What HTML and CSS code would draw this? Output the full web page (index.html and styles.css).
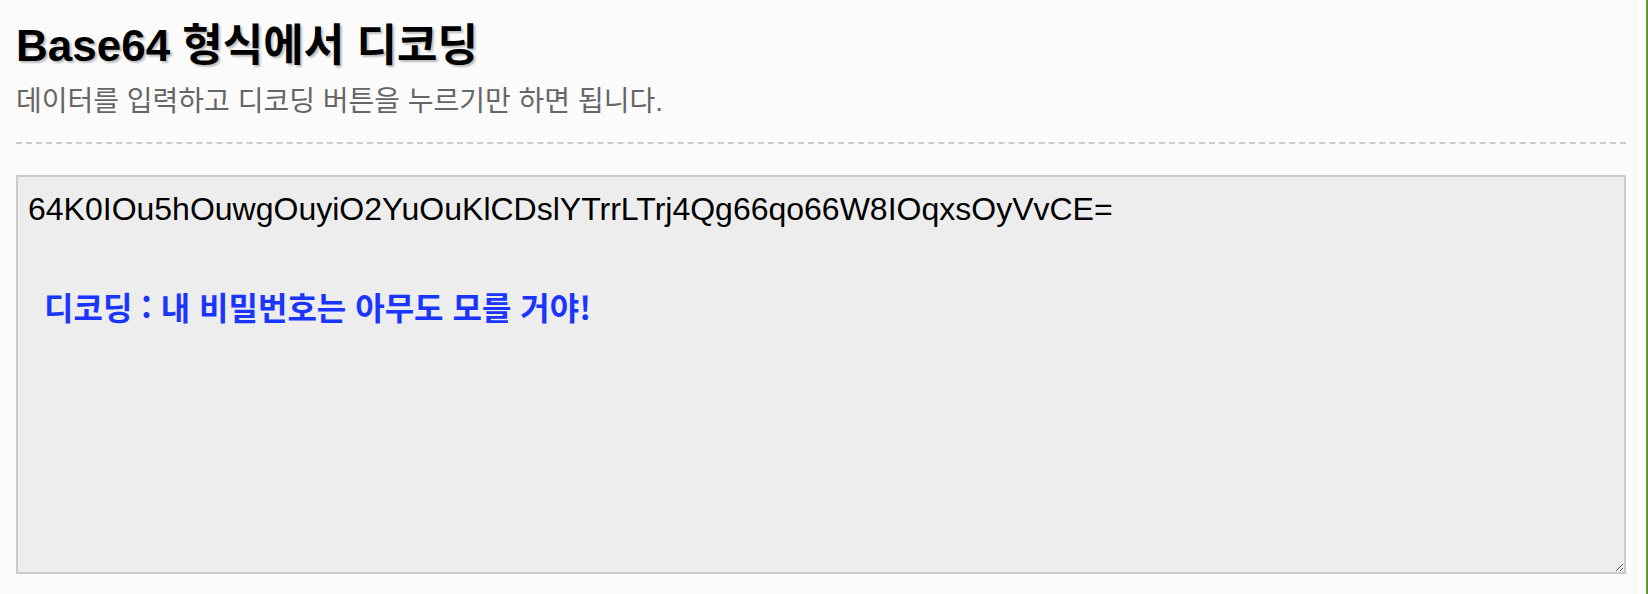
FILE: index.html
```html
<!DOCTYPE html>
<html lang="ko">
<head>
    <meta charset="UTF-8">
    <meta name="viewport" content="width=device-width, initial-scale=1.0">
    <title>Base64 디코딩</title>
    <link rel="stylesheet" href="styles.css">
</head>
<body>
    <div class="page">
        <main class="content">
            <header class="intro">
                <h1>Base64 형식에서 디코딩</h1>
                <p>데이터를 입력하고 디코딩 버튼을 누르기만 하면 됩니다.</p>
            </header>

            <div class="editor">
                <textarea id="source" spellcheck="false">64K0IOu5hOuwgOuyiO2YuOuKlCDslYTrrLTrj4Qg66qo66W8IOqxsOyVvCE=</textarea>
                <div class="result">디코딩 : 내 비밀번호는 아무도 모를 거야!</div>
            </div>
        </main>
    </div>
</body>
</html>
```

FILE: styles.css
```css
body {
    margin: 0;
    font-family: "Liberation Sans", "Noto Sans CJK KR", sans-serif;
    background-color: #fff;
    color: #000;
}

.page {
    display: flex;
    height: 100vh;
    padding-right: 8px;
    border-right: 2px solid #5b9b2f;
    box-sizing: border-box;
}

.content {
    flex: 1;
    background-color: #fbfbfb;
    padding: 0 12px 0 16px;
}

.intro {
    padding-bottom: 21px;
    border-bottom: 2px dashed #ccc;
}

.intro h1 {
    margin: 0;
    padding-top: 20px;
    font-size: 44px;
    line-height: 1.2;
    text-shadow: 2px 2px 2px #bbb;
}

.intro p {
    margin: 9px 0 0;
    font-size: 28px;
    line-height: 1.4;
    color: #666;
}

.editor {
    position: relative;
    margin-top: 31px;
}

.editor textarea {
    display: block;
    width: 100%;
    height: 399px;
    box-sizing: border-box;
    padding: 14px 10px;
    border: 2px solid #cbcbcb;
    border-radius: 0;
    background-color: #ededed;
    font-family: "Liberation Sans", sans-serif;
    font-size: 32px;
    color: #000;
    resize: both;
}

.result {
    position: absolute;
    top: 112px;
    left: 28px;
    font-family: "Noto Sans CJK KR", sans-serif;
    font-size: 32px;
    font-weight: bold;
    line-height: 1.2;
    color: #1a35ff;
}
```
